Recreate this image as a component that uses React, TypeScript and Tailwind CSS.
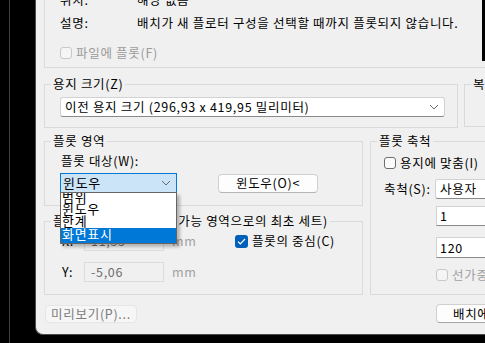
import React from 'react';

const Chevron = () => (
    <svg width="10" height="6" viewBox="0 0 10 6" className="shrink-0">
        <path d="M1 1 L5 5 L9 1" fill="none" stroke="#6b6b6b" strokeWidth="1" />
    </svg>
);

const Box = ({ checked = false, disabled = false }: { checked?: boolean; disabled?: boolean }) => {
    if (checked) {
        return (
            <span className="flex h-[13px] w-[13px] shrink-0 items-center justify-center rounded-[3px] bg-[#005fb8]">
                <svg width="9" height="7" viewBox="0 0 9 7">
                    <path d="M1 3.6 L3.3 5.8 L8 1" fill="none" stroke="#ffffff" strokeWidth="1.2" />
                </svg>
            </span>
        );
    }
    return (
        <span
            className={
                disabled
                    ? 'h-[12px] w-[12px] shrink-0 rounded-[3px] border border-[#c8c8c8] bg-[#f5f5f5]'
                    : 'h-[12px] w-[12px] shrink-0 rounded-[3px] border border-[#6e6e6e] bg-[#fbfbfb]'
            }
        />
    );
};

export default function App() {
    return (
        <div className="relative flex h-[343px] w-[485px] overflow-hidden bg-black font-['Noto_Sans_CJK_KR',sans-serif] text-[12.5px] leading-[14px] tracking-[0.7px] text-black">
            {/* 왼쪽 어두운 영역 */}
            <div className="h-full w-[35px] shrink-0">
                <div className="ml-[9px] h-full w-px bg-[#3d3d3d]" />
            </div>

            {/* 대화상자 */}
            <div className="h-[335px] w-[450px] shrink-0 overflow-hidden rounded-bl-[8px] border-b border-l border-[#4b4b4b] bg-[#f0f0f0] pl-[8px]">
                {/* 프린터 정보 */}
                <div className="-mt-[20px] h-[88px] w-[470px] border border-[#dadada] pl-[15px] pt-[12px]">
                    <div className="flex h-[14px] items-center">
                        <span className="w-[77px]">위치:</span>
                        <span>해당 없음</span>
                    </div>
                    <div className="mt-[9px] flex h-[14px] items-center">
                        <span className="w-[77px]">설명:</span>
                        <span className="whitespace-nowrap">배치가 새 플로터 구성을 선택할 때까지 플롯되지 않습니다.</span>
                    </div>
                    <div className="mt-[16px] flex h-[14px] items-center gap-[4px] text-[#9b9b9b]">
                        <Box disabled />
                        <span>파일에 플롯(F)</span>
                    </div>
                </div>

                {/* 용지 크기 */}
                <div className="mt-[9px] flex w-[480px]">
                    <fieldset className="h-[51px] w-[414px] shrink-0 border border-[#dadada] pl-[6px]">
                        <legend className="px-[2px] leading-[14px]">용지 크기(Z)</legend>
                        <div className="pl-[9px] pt-[6px]">
                            <div className="flex h-[20px] w-[385px] items-center justify-between rounded-[3px] border border-[#d2d2d2] border-b-[#8a8a8a] bg-white pl-[4px] pr-[5px]">
                                <span>이전 용지 크기 (296,93 x 419,95 밀리미터)</span>
                                <Chevron />
                            </div>
                        </div>
                    </fieldset>
                    <fieldset className="ml-[6px] h-[50px] w-[60px] shrink-0 border border-[#dadada] pl-[6px]">
                        <legend className="px-[2px] leading-[14px]">복</legend>
                    </fieldset>
                </div>

                <div className="mt-[6px] flex w-[480px]">
                    {/* 왼쪽 열 */}
                    <div className="w-[319px] shrink-0">
                        <fieldset className="h-[72px] border border-[#dadada] pl-[6px]">
                            <legend className="px-[2px] leading-[14px]">플롯 영역</legend>
                            <div className="pl-[9px] pt-[6px]">
                                <div className="h-[14px] pl-px">플롯 대상(W):</div>
                                <div className="mt-[5px] flex items-center">
                                    <div className="relative shrink-0">
                                        <div className="flex h-[20px] w-[117px] items-center justify-between border border-[#0078d4] bg-[#cce4f7] pl-[2px] pr-[5px]">
                                            <span className="text-[13px]">윈도우</span>
                                            <Chevron />
                                        </div>
                                        {/* 펼쳐진 목록 */}
                                        <div className="absolute left-0 top-[19px] z-10 h-[52px] w-[117px] overflow-hidden border border-[#646464] bg-white shadow-[3px_3px_3px_rgba(0,0,0,0.25)]">
                                            <div className="-mt-[2px] h-[12px] pl-px text-[13px] leading-[12px]">범위</div>
                                            <div className="h-[12px] pl-px text-[13px] leading-[12px]">윈도우</div>
                                            <div className="h-[13px] pl-px text-[13px] leading-[12px]">한계</div>
                                            <div className="h-[15px] bg-[#0078d7] pl-px text-[13px] leading-[12px] text-white">화면표시</div>
                                        </div>
                                    </div>
                                    <button className="ml-[41px] flex h-[19px] w-[100px] shrink-0 items-center justify-center rounded-[4px] border border-[#d0d0d0] border-b-[#b5b5b5] bg-[#fdfdfd]">
                                        윈도우(O)&lt;
                                    </button>
                                </div>
                            </div>
                        </fieldset>

                        <fieldset className="mt-[8px] h-[81px] border border-[#dadada] pl-[6px]">
                            <legend className="whitespace-nowrap px-[2px] leading-[14px]">플롯 간격띄우기 (인쇄 가능 영역으로의 최초 세트)</legend>
                            <div className="pl-[11px] pt-[3px]">
                                <div className="flex h-[20px] items-center">
                                    <span className="w-[22px]">X:</span>
                                    <span className="flex h-[20px] w-[80px] items-center border border-[#dcdcdc] bg-[#f0f0f0] pl-[6px] text-[#6d6d6d]">11,55</span>
                                    <span className="ml-[8px] w-[63px] text-[#a0a0a0]">mm</span>
                                    <Box checked />
                                    <span className="ml-[4px]">플롯의 중심(C)</span>
                                </div>
                                <div className="mt-[11px] flex h-[20px] items-center">
                                    <span className="w-[22px]">Y:</span>
                                    <span className="flex h-[20px] w-[80px] items-center border border-[#dcdcdc] bg-[#f0f0f0] pl-[6px] text-[#6d6d6d]">-5,06</span>
                                    <span className="ml-[8px] text-[#a0a0a0]">mm</span>
                                </div>
                            </div>
                        </fieldset>
                    </div>

                    {/* 플롯 축척 */}
                    <fieldset className="ml-[7px] h-[161px] w-[140px] shrink-0 border border-[#dadada] pl-[6px]">
                        <legend className="whitespace-nowrap px-[2px] leading-[14px]">플롯 축척</legend>
                        <div className="pl-[7px] pt-[8px]">
                            <div className="flex h-[14px] items-center gap-[4px] whitespace-nowrap">
                                <Box />
                                <span>용지에 맞춤(I)</span>
                            </div>
                            <div className="mt-[9px] flex items-center">
                                <span className="w-[51px] shrink-0 whitespace-nowrap">축척(S):</span>
                                <div className="flex h-[20px] w-[80px] shrink-0 items-center rounded-[3px] border border-[#d2d2d2] border-b-[#8a8a8a] bg-white pl-[4px]">
                                    사용자
                                </div>
                            </div>
                            <div className="ml-[52px] mt-[7px] flex h-[20px] w-[80px] items-center border border-[#d2d2d2] border-b-[#8a8a8a] bg-white pl-[3px]">
                                1
                            </div>
                            <div className="ml-[52px] mt-[11px] flex h-[21px] w-[80px] items-center border border-[#d2d2d2] border-b-[#8a8a8a] bg-white pl-[3px]">
                                120
                            </div>
                            <div className="ml-[52px] mt-[10px] flex h-[14px] items-center gap-[4px] whitespace-nowrap text-[#a0a0a0]">
                                <Box disabled />
                                <span>선가중치로 플롯</span>
                            </div>
                        </div>
                    </fieldset>
                </div>

                {/* 하단 버튼 */}
                <div className="mt-[9px] flex w-[480px] items-center">
                    <button className="ml-px flex h-[18px] w-[92px] shrink-0 items-center justify-center whitespace-nowrap rounded-[4px] border border-[#e6e6e6] bg-[#f6f6f6] text-[#7c7c7c]">
                        미리보기(P)...
                    </button>
                    <button className="ml-[299px] flex h-[19px] w-[118px] shrink-0 items-center justify-center whitespace-nowrap rounded-[4px] border border-[#d0d0d0] border-b-[#a8a8a8] bg-[#fdfdfd]">
                        배치에 적용(U)
                    </button>
                </div>
            </div>

            <div className="absolute right-0 top-0 h-[61px] w-[3px] bg-black" />
        </div>
    );
}
